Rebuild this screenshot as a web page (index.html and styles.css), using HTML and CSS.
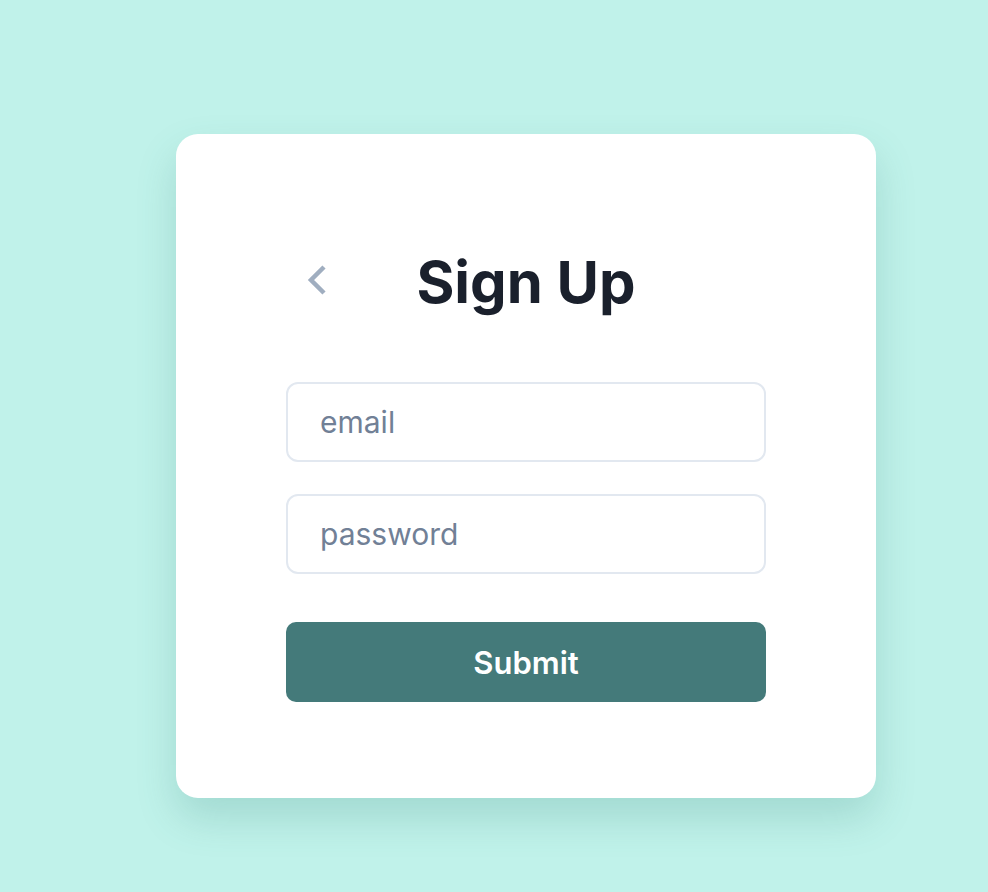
FILE: index.html
```html
<!DOCTYPE html>
<html>
<head>
<meta charset="utf-8">
<link rel="stylesheet" href="styles.css">
</head>
<body>
<main class="page">
  <section class="card">
    <header class="card-header">
      <button class="back" aria-label="Back">
        <svg width="24" height="34" viewBox="0 0 24 34" fill="none"><path d="M19 4 L6 17 L19 30" stroke="#a0aec0" stroke-width="4.5" stroke-linejoin="miter"/></svg>
      </button>
      <h1 class="title">Sign Up</h1>
    </header>
    <form class="form">
      <input class="field" type="text" placeholder="email">
      <input class="field" type="password" placeholder="password">
      <button class="submit" type="button">Submit</button>
    </form>
  </section>
</main>
</body>
</html>
```
FILE: styles.css
```css
* { box-sizing: border-box; }
html, body { margin: 0; height: 100%; }
body {
  background: #c0f2ea;
  font-family: Inter, "Noto Sans", sans-serif;
}
.page {
  padding: 134px 0 0 176px;
}
.card {
  width: 700px;
  height: 664px;
  background: #fff;
  border-radius: 22px;
  box-shadow: 0 20px 40px rgba(40, 120, 110, 0.2);
  padding: 96px 110px;
}
.card-header {
  position: relative;
  display: flex;
  justify-content: center;
  align-items: center;
  height: 100px;
}
.back {
  position: absolute;
  left: 19px;
  top: 50%;
  transform: translateY(-50%);
  background: none;
  border: 0;
  padding: 0;
  display: flex;
}
.title {
  margin: 4px 0 0;
  font-size: 58px;
  font-weight: 700;
  color: #1a202c;
  letter-spacing: 0;
}
.form {
  display: flex;
  flex-direction: column;
  gap: 32px;
  margin-top: 52px;
}
.field {
  height: 80px;
  border: 2px solid #e2e8f0;
  border-radius: 12px;
  padding: 0 32px;
  font-family: inherit;
  font-size: 30px;
  color: #2d3748;
  outline: none;
}
.field::placeholder { color: #718096; }
.submit {
  margin-top: 16px;
  height: 80px;
  border: 0;
  border-radius: 10px;
  background: #447a7a;
  color: #fff;
  font-family: inherit;
  font-size: 31px;
  font-weight: 600;
}
```
